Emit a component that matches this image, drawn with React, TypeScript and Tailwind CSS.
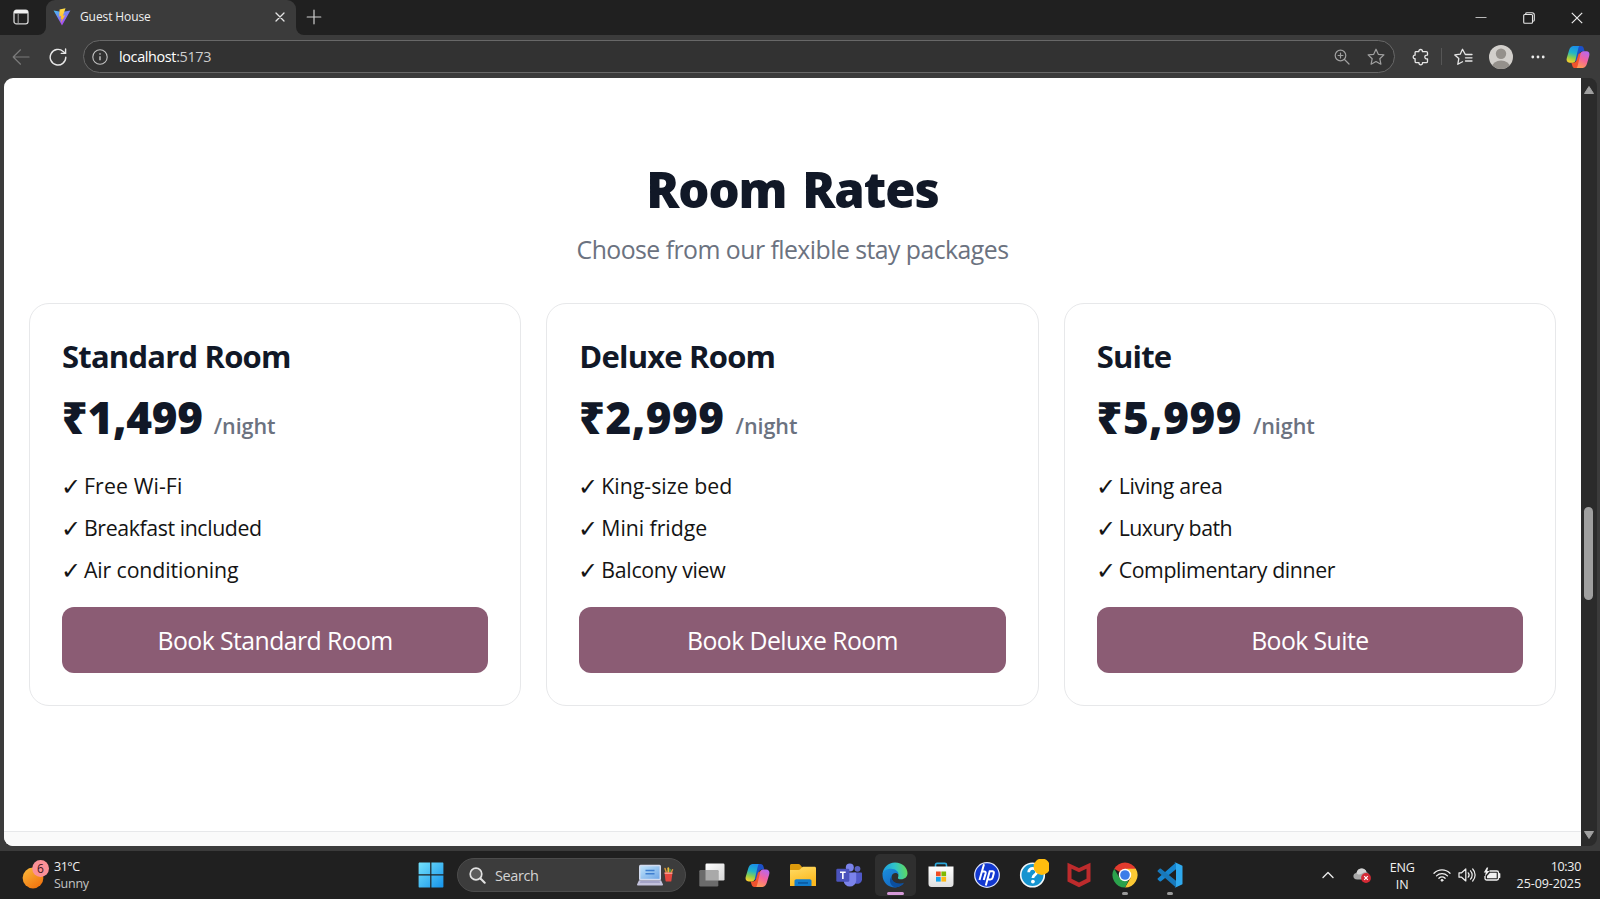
import type { ReactNode } from "react";

type Perk = { label: string; fit: string };
type Room = { name: string; price: string; priceFit: string; perks: Perk[] };

const rooms: Room[] = [
  {
    name: "Standard Room",
    price: "₹1,499",
    priceFit: "tracking-[-0.300px]",
    perks: [
      { label: "Free Wi-Fi", fit: "tracking-[0.100px]" },
      { label: "Breakfast included", fit: "tracking-[-0.400px]" },
      { label: "Air conditioning", fit: "tracking-[-0.120px]" },
    ],
  },
  {
    name: "Deluxe Room",
    price: "₹2,999",
    priceFit: "tracking-[0.450px]",
    perks: [
      { label: "King-size bed", fit: "tracking-[0px]" },
      { label: "Mini fridge", fit: "tracking-[-0.050px]" },
      { label: "Balcony view", fit: "tracking-[-0.300px]" },
    ],
  },
  {
    name: "Suite",
    price: "₹5,999",
    priceFit: "tracking-[0.450px]",
    perks: [
      { label: "Living area", fit: "tracking-[-0.280px]" },
      { label: "Luxury bath", fit: "tracking-[-0.480px]" },
      { label: "Complimentary dinner", fit: "tracking-[-0.380px]" },
    ],
  },
];

function CopilotLogo({ id, size }: { id: string; size: number }) {
  return (
    <svg width={size} height={size} viewBox="0 0 24 24">
      <defs>
        <linearGradient id={`${id}a`} x1="0.5" y1="0" x2="0.3" y2="1">
          <stop offset="0" stopColor="#1a8fe8" />
          <stop offset="0.4" stopColor="#22b5c8" />
          <stop offset="0.7" stopColor="#8fce4a" />
          <stop offset="1" stopColor="#ffd02b" />
        </linearGradient>
        <linearGradient id={`${id}b`} x1="0.7" y1="0" x2="0.3" y2="1">
          <stop offset="0" stopColor="#b867ee" />
          <stop offset="0.5" stopColor="#f4629c" />
          <stop offset="1" stopColor="#ff9a55" />
        </linearGradient>
      </defs>
      <path d="M7.500 1H15c1.500 0 2.300.9 2.700 2.300l.9 3h-2.200c-1.600 0-2.600.9-3 2.400L11.500 15 8 17z" fill="#1c50c8" />
      <path d="M16.500 23H9c-1.500 0-2.300-.9-2.700-2.300l-.9-3h2.200c1.600 0 2.600-.9 3-2.400L12.500 9 16 7z" fill="#f0532d" />
      <path d="M13.500 1H7.200C4.900 1 3.700 3.200 3 5.500L.8 13c-.8 2.700.3 4.700 2.900 4.700h3c1.500 0 2.300-1 2.700-2.300l2.500-10.500C12.400 2.800 12.800 1 13.500 1z" fill={`url(#${id}a)`} />
      <path d="M10.500 23h6.300c2.300 0 3.500-2.200 4.200-4.500l2.200-7.500c.8-2.700-.3-4.700-2.900-4.700h-3c-1.500 0-2.300 1-2.700 2.300l-2.500 10.500C11.600 21.200 11.200 23 10.500 23z" fill={`url(#${id}b)`} />
    </svg>
  );
}

function TitleBar() {
  return (
    <div className="flex h-[35px] shrink-0 bg-[#3b3b3b]">
      <div className="flex w-[46px] items-center justify-center rounded-br-[8px] bg-[#202020] pr-[4px] pb-[2px]">
        <svg width="16" height="16" viewBox="0 0 16 16" fill="none">
          <rect x="1" y="1.200" width="14" height="13.600" rx="2.400" stroke="#d6d6d6" strokeWidth="1.300" />
          <path d="M1.500 4V3c0-1 .8-1.500 1.600-1.500h9.800c.8 0 1.600.5 1.600 1.500v1z" fill="#f2f2f2" stroke="#f2f2f2" />
          <path d="M5.200 5v9.500" stroke="#9d9d9d" strokeWidth="1.100" />
        </svg>
      </div>
      <div className="flex bg-[#202020]">
        <div className="flex w-[250px] items-center rounded-t-[9px] bg-[#3b3b3b] pr-[10px] pb-[2px] pl-[7px]">
          <svg width="18" height="18" viewBox="0 0 18 18" className="shrink-0">
            <defs>
              <linearGradient id="viteA" x1="0" y1="0" x2="0.6" y2="1">
                <stop offset="0" stopColor="#41c1f5" />
                <stop offset="1" stopColor="#b43cf0" />
              </linearGradient>
              <linearGradient id="viteB" x1="0.5" y1="0" x2="0.5" y2="1">
                <stop offset="0" stopColor="#ffdf4a" />
                <stop offset="1" stopColor="#ffa81f" />
              </linearGradient>
            </defs>
            <path d="M.6 2.500 9 17.600 17.400 2.500 9 4z" fill="url(#viteA)" />
            <path d="M12.500.3 6.600 1.500 6.200 8.400l1.900-.4-.6 3.200 1.300-.4-.9 4.300 4.200-7.800-2.200.4z" fill="url(#viteB)" />
          </svg>
          <span className="ml-[9px] flex-1 text-[12px] leading-[18px] tracking-[-0.1px] text-[#f0f0f0]">Guest House</span>
          <svg width="12" height="12" viewBox="0 0 12 12" stroke="#e4e4e4" strokeWidth="1.300" strokeLinecap="round">
            <path d="M2 2l8 8M10 2l-8 8" />
          </svg>
        </div>
      </div>
      <div className="flex flex-1 items-center justify-between rounded-bl-[8px] bg-[#202020] pr-[17px] pb-[2px] pl-[10px]">
        <svg width="16" height="16" viewBox="0 0 16 16" stroke="#d0d0d0" strokeWidth="1.200" strokeLinecap="round">
          <path d="M8 1.200v13.600M1.200 8h13.600" />
        </svg>
        <div className="flex items-center gap-[36px] pt-[2px]">
          <svg width="12" height="12" viewBox="0 0 12 12" stroke="#b9b9b9">
            <path d="M.5 5.500h11" />
          </svg>
          <svg width="12" height="12" viewBox="0 0 12 12" fill="none" stroke="#e6e6e6" strokeWidth="1.100">
            <rect x="0.700" y="2.500" width="8.800" height="8.800" rx="1" />
            <path d="M2.700 1.900c0-.8.500-1.200 1.200-1.200h5.200c1.400 0 2.200.8 2.200 2.200v5.200c0 .7-.4 1.200-1.200 1.200" />
          </svg>
          <svg width="12" height="12" viewBox="0 0 12 12" stroke="#ececec" strokeWidth="1.200">
            <path d="M.8.800l10.400 10.400M11.200.800.8 11.200" />
          </svg>
        </div>
      </div>
    </div>
  );
}

function Toolbar() {
  return (
    <div className="flex h-[43px] shrink-0 items-center bg-[#3b3b3b]">
      <svg width="18" height="18" viewBox="0 0 18 18" fill="none" stroke="#7b7b7b" strokeWidth="1.200" strokeLinecap="round" strokeLinejoin="round" className="ml-[12px]">
        <path d="M17 9H1.200M8.500 1.800 1.200 9l7.300 7.200" />
      </svg>
      <svg width="18" height="18" viewBox="0 0 18 18" fill="none" stroke="#e8e8e8" strokeWidth="1.400" strokeLinecap="round" className="ml-[19px]">
        <path d="M16.800 9.200a7.800 7.800 0 1 1-2.600-5.800l2 1.800" />
        <path d="M16.600 1v4.400h-4.300" />
      </svg>
      <div className="ml-[16px] flex h-[33px] w-[1312px] items-center rounded-full border border-[#686868] bg-[#323232] pr-[9px] pl-[8px]">
        <svg width="16" height="16" viewBox="0 0 16 16" fill="none" stroke="#c2c2c2" strokeWidth="1.100">
          <circle cx="8" cy="8" r="7.200" />
          <path d="M8 7.200v4" strokeWidth="1.400" />
          <circle cx="8" cy="4.900" r="0.500" fill="#c2c2c2" strokeWidth="0.600" />
        </svg>
        <span className="ml-[11px] flex-1 text-[14.400px] leading-[20px] tracking-[-0.350px] text-white">
          localhost<span className="text-[#cfcfcf]">:5173</span>
        </span>
        <svg width="16" height="16" viewBox="0 0 16 16" fill="none" stroke="#a0a0a0" strokeWidth="1.200" strokeLinecap="round">
          <circle cx="6.500" cy="6.500" r="5.300" />
          <path d="M10.500 10.500l4.500 4.500M6.500 4.100v4.800M4.100 6.500h4.800" />
        </svg>
        <svg width="18" height="18" viewBox="0 0 18 18" fill="none" stroke="#a0a0a0" strokeWidth="1.200" strokeLinejoin="round" className="ml-[17px]">
          <path d="M9 1.200l2.300 5.100 5.600.6-4.100 3.800 1.100 5.500L9 13.500l-4.900 2.700 1.100-5.500L1.100 6.900l5.600-.6z" />
        </svg>
      </div>
      <svg width="18" height="18" viewBox="0 0 18 18" fill="none" stroke="#e6e6e6" strokeWidth="1.300" strokeLinejoin="round" className="ml-[17px]">
        <path d="M3.800 3.600h3.100c-.5-2.800 4-2.800 3.500 0h3.900c.7 0 1.200.5 1.200 1.200v2.300c-3.600-.5-3.600 4.300 0 3.800v2.600c0 .7-.5 1.200-1.200 1.200h-3.800c.5 2.800-4 2.800-3.500 0H4.300c-.7 0-1.200-.5-1.200-1.200v-2.800c-2.500.3-2.500-3.800 0-3.500V4.800c0-.7.100-1.200.700-1.200z" />
      </svg>
      <div className="ml-[11px] h-[17px] w-px bg-[#565656]" />
      <svg width="19" height="18" viewBox="0 0 19 18" fill="none" stroke="#e6e6e6" strokeWidth="1.300" strokeLinejoin="round" strokeLinecap="round" className="ml-[12px]">
        <path d="M11.200 6.200 8.500 1.200 6.200 6.200l-5.400.7 4 3.700-1 5.700 4.700-2.600" />
        <path d="M11.500 6.500h6.500M11.500 9.800h6.500M11.500 13h6.500" />
      </svg>
      <svg width="24" height="24" viewBox="0 0 24 24" className="ml-[16px]">
        <clipPath id="avatarClip"><circle cx="12" cy="12" r="12" /></clipPath>
        <g clipPath="url(#avatarClip)">
          <rect width="24" height="24" fill="#d2cfcb" />
          <circle cx="12" cy="8.800" r="5.200" fill="#94908b" />
          <ellipse cx="12" cy="22" rx="9" ry="6.400" fill="#94908b" />
        </g>
      </svg>
      <svg width="14" height="4" viewBox="0 0 14 4" fill="#ececec" className="ml-[18px]">
        <circle cx="1.800" cy="2" r="1.400" /><circle cx="7" cy="2" r="1.400" /><circle cx="12.200" cy="2" r="1.400" />
      </svg>
      <div className="ml-[21px]"><CopilotLogo id="cpTop" size={24} /></div>
    </div>
  );
}

function RoomCard({ room }: { room: Room }) {
  return (
    <article className="rounded-[20px] border border-[#e7e8ea] bg-white px-[32px] pt-[32px] pb-[32px]">
      <h3 className="text-[31px] leading-[40px] font-bold tracking-[-0.800px] text-[#111827]">{room.name}</h3>
      <p className="mt-[17px] flex h-[48px] items-baseline leading-[48px]">
        <span className={`font-['Noto_Sans'] text-[44px] font-black text-[#111827] ${room.priceFit}`}>{room.price}</span>
        <span className="ml-[11px] text-[21.500px] font-semibold tracking-[-0.050px] text-[#6b7280]">/night</span>
      </p>
      <ul className="mt-[28px] flex flex-col gap-[7.850px] text-[21.300px] leading-[34px] text-[#141414]">
        {room.perks.map((perk) => (
          <li key={perk.label} className="flex h-[34px]">
            <span className="-ml-px w-[23px] text-[24px]">✓</span>
            <span className={perk.fit}>{perk.label}</span>
          </li>
        ))}
      </ul>
      <button className="mt-[20px] h-[66px] w-full rounded-[12px] bg-[#8b5c74] text-[24.800px] leading-[36px] tracking-[-0.580px] text-white">
        Book {room.name}
      </button>
    </article>
  );
}

function Page() {
  return (
    <div className="flex min-h-0 flex-1 bg-[#3b3b3b] pr-[3px] pb-[5px] pl-[4px]">
      <main className="flex flex-1 flex-col overflow-hidden rounded-l-[9px] bg-white">
        <section className="flex-1 px-[25px] pt-[86px]">
          <h2 className="text-center text-[49px] leading-[50px] font-extrabold tracking-[-1.050px] [word-spacing:4px] text-[#111827]">Room Rates</h2>
          <p className="mt-[17px] text-center text-[24.800px] leading-[36px] tracking-[-0.530px] text-[#6b7280]">
            Choose from our flexible stay packages
          </p>
          <div className="mt-[36px] grid grid-cols-3 gap-[25px]">
            {rooms.map((room) => (
              <RoomCard key={room.name} room={room} />
            ))}
          </div>
        </section>
        <div className="h-[15px] border-t border-[#e7e8ea] bg-[#fafafa]" />
      </main>
      <div className="flex w-[16px] flex-col items-center rounded-r-[8px] bg-[#2b2b2b] pt-[7px] pr-px pb-[6px]">
        <svg width="12" height="10" viewBox="0 0 12 10" fill="#a0a0a0" stroke="#a0a0a0" strokeLinejoin="round">
          <path d="M6 1.500 10.500 8.500h-9z" />
        </svg>
        <div className="mt-[412px] h-[93px] w-[9px] rounded-full bg-[#9f9f9f]" />
        <div className="flex-1" />
        <svg width="12" height="10" viewBox="0 0 12 10" fill="#a0a0a0" stroke="#a0a0a0" strokeLinejoin="round">
          <path d="M6 8.500 10.500 1.500h-9z" />
        </svg>
      </div>
    </div>
  );
}

function Slot({ children, active, mark }: { children: ReactNode; active?: boolean; mark?: string }) {
  return (
    <div className={`relative flex h-[42px] w-[41px] items-center justify-center rounded-[5px] ${active ? "bg-[#2f2f2f]" : ""}`}>
      {children}
      {mark && <span className={`absolute bottom-px h-[3px] rounded-full ${mark}`} />}
    </div>
  );
}

function TaskIcons() {
  return (
    <div className="flex items-center gap-[4.900px]">
      <Slot>
        <svg width="26" height="24" viewBox="0 0 26 24">
          <defs>
            <linearGradient id="tv" x1="0" y1="0" x2="1" y2="1"><stop stopColor="#fff" /><stop offset="1" stopColor="#d5d5d5" /></linearGradient>
          </defs>
          <rect x="6.500" y="0.500" width="19" height="17" rx="1.200" fill="url(#tv)" />
          <rect x="0.300" y="7" width="19" height="16.500" rx="1.200" fill="#6b6b6b" />
          <path d="M6.500 7h12.800v10.500H6.500z" fill="#a9a9a9" />
        </svg>
      </Slot>
      <Slot><CopilotLogo id="cpBar" size={25} /></Slot>
      <Slot>
        <svg width="26" height="24" viewBox="0 0 26 24">
          <defs>
            <linearGradient id="fold" x1="0" y1="0" x2="0.400" y2="1"><stop stopColor="#ffdd68" /><stop offset="1" stopColor="#fbb81e" /></linearGradient>
          </defs>
          <path d="M0 2.500C0 1.600.6 1 1.500 1h7c.7 0 1.200.2 1.600.7L12 4v6H0z" fill="#dd9a0c" />
          <path d="M0 7h8.500c.7 0 1.200-.3 1.700-.8l2-2c.4-.4.800-.5 1.400-.5h11c.8 0 1.400.6 1.400 1.300V23H0z" fill="url(#fold)" />
          <path d="M4.500 23v-5c0-1.100.8-1.800 1.800-1.800h13.400c1 0 1.800.7 1.800 1.800v5z" fill="#127dcc" />
          <path d="M8 19.200h10v1.500H8z" fill="#0a559c" />
        </svg>
      </Slot>
      <Slot>
        <svg width="26" height="24" viewBox="0 0 26 24">
          <circle cx="21.500" cy="5.800" r="2.900" fill="#5a62c3" />
          <path d="M17.500 9.500H25c.6 0 1 .4 1 1v5.700a4.700 4.700 0 0 1-7 4z" fill="#5059c9" />
          <circle cx="13.800" cy="4.500" r="4" fill="#7b83eb" />
          <path d="M8.500 9.500h10.700c.6 0 1 .5 1 1v6.700a6.300 6.300 0 0 1-12.600 0z" fill="#7b83eb" />
          <rect x="0.300" y="5.800" width="13" height="13" rx="1.200" fill="#4b53bc" />
          <path d="M4 9.300h5.700M6.850 9.300v6.600" stroke="#fff" strokeWidth="1.600" />
        </svg>
      </Slot>
      <Slot active mark="w-[17px] bg-[#d59ad8]">
        <svg width="26" height="26" viewBox="0 0 26 26">
          <defs>
            <linearGradient id="edA" x1="0" y1="0.400" x2="1" y2="0.300"><stop stopColor="#1d9de2" /><stop offset="0.500" stopColor="#2fc3c9" /><stop offset="1" stopColor="#62dc58" /></linearGradient>
            <linearGradient id="edB" x1="0" y1="0" x2="0.700" y2="1"><stop stopColor="#1c8fdc" /><stop offset="1" stopColor="#1267c4" /></linearGradient>
          </defs>
          <path d="M.5 12.500C.8 5.800 6.200.5 13 .5c7.600 0 12.500 5.200 12.500 10.800 0 3.800-3 6-6.300 6-2.800 0-3.600-1-3.200-1.900 1.600-3.600-1.300-7-5.500-7C5 8.400.9 10 .5 12.500z" fill="url(#edA)" />
          <path d="M.5 13c0-3.900 3.800-6.300 8.500-6.300 4.700 0 7.700 3 7.600 6-2-3-7.100-1.700-7.100 2.700 0 5.200 6.500 8.200 12 6.200A12.400 12.400 0 0 1 13 25.500C6 25.500.5 20 .5 13z" fill="url(#edB)" />
          <path d="M9.600 14.200c-.8 5.200 5.400 8.800 12.500 6.600-2 2.800-5.300 4.500-8.800 4.600C8.500 24 6.200 18.600 9.600 14.200z" fill="#0c4f9e" />
        </svg>
      </Slot>
      <Slot>
        <svg width="26" height="26" viewBox="0 0 26 26">
          <defs>
            <linearGradient id="store" x1="0" y1="0" x2="0" y2="1"><stop stopColor="#fff" /><stop offset="1" stopColor="#dedede" /></linearGradient>
          </defs>
          <path d="M7.500 6V3c0-1 .6-1.600 1.600-1.600h7.800c1 0 1.600.6 1.600 1.600v3" fill="none" stroke="#2aa8dc" strokeWidth="1.600" />
          <path d="M.5 4.500h25v17.500c0 1.800-1.200 3-3 3H3.500c-1.800 0-3-1.200-3-3z" fill="url(#store)" />
          <rect x="8" y="9.500" width="4.700" height="4.700" fill="#ef4d23" /><rect x="13.400" y="9.500" width="4.700" height="4.700" fill="#7fb900" />
          <rect x="8" y="14.900" width="4.700" height="4.700" fill="#13a1ec" /><rect x="13.400" y="14.900" width="4.700" height="4.700" fill="#fdb813" />
        </svg>
      </Slot>
      <Slot>
        <svg width="26" height="26" viewBox="0 0 26 26">
          <circle cx="13" cy="13" r="12.300" fill="#1238d0" stroke="#dfe5fb" strokeWidth="1.200" />
          <path d="M10 2.300 5.500 18M7.700 9.500h2.500c1.300 0 1.700.8 1.400 2L9.700 18M19 9.300h-3.300L11.800 23.500M15.700 9.300h2.600c1.400 0 1.800.8 1.500 2l-1.200 4.500c-.3 1.200-1 1.700-2.200 1.700h-2" fill="none" stroke="#fff" strokeWidth="2" />
        </svg>
      </Slot>
      <Slot>
        <svg width="32" height="32" viewBox="0 0 32 32" className="shrink-0">
          <circle cx="15.500" cy="16" r="11.800" fill="#1594d0" stroke="#f3f8fb" strokeWidth="1.600" />
          <path d="M11.700 13.300c0-5.200 8-5 8-.4 0 3-3.800 3-3.800 6" fill="none" stroke="#fff" strokeWidth="2.800" />
          <circle cx="15.900" cy="22.600" r="1.900" fill="#fff" />
          <circle cx="24.800" cy="7.700" r="8.200" fill="#ffbd0e" />
        </svg>
      </Slot>
      <Slot>
        <svg width="24" height="26" viewBox="0 0 24 26">
          <path d="M.5.8 12 6 23.500.8v18.700L12 25.200.5 19.500zM4.500 6.800v10l7.500 3.600 7.500-3.600v-10L12 10.300z" fill="#bd2b2c" fillRule="evenodd" />
        </svg>
      </Slot>
      <Slot mark="w-[6px] bg-[#9a9a9a]">
        <svg width="26" height="26" viewBox="0 0 26 26">
          <path d="M13 13 2.200 6.700a12.500 12.500 0 0 1 21.600 0z" fill="#e23b2e" />
          <path d="M13 6.700h10.800A12.500 12.500 0 0 1 13 25.500l5.500-9.500z" fill="#fcc934" />
          <path d="M2.200 6.700 7.600 16.100 13 19.200l3.500-.6L13 25.500A12.500 12.500 0 0 1 2.200 6.700z" fill="#2ba24c" />
          <circle cx="13" cy="13" r="6.200" fill="#fff" /><circle cx="13" cy="13" r="4.800" fill="#3c7de8" />
        </svg>
      </Slot>
      <Slot mark="w-[6px] bg-[#9a9a9a]">
        <svg width="26" height="26" viewBox="0 0 26 26">
          <path d="M19 .5v6.800L4 19.200c-.5.4-1 .4-1.400 0L.9 17.700c-.5-.5-.5-1.100 0-1.500z" fill="#1685cf" />
          <path d="M19 25.500v-6.800L4 6.800c-.5-.4-1-.4-1.400 0L.9 8.300c-.5.5-.5 1.100 0 1.500z" fill="#1878ba" />
          <path d="M18.500.5 25 3.400c.3.200.5.500.5.900v17.400c0 .4-.2.700-.5.900l-6.500 2.900c-.5.100-1 0-1.400-.4.800.6 1.900.1 1.900-.9V1.800c0-1-1.100-1.500-1.900-.9.400-.4.900-.5 1.400-.4z" fill="#2fa9ee" />
        </svg>
      </Slot>
    </div>
  );
}

function Taskbar() {
  return (
    <footer className="flex h-[48px] shrink-0 items-center bg-[#202020] text-[12.500px] text-[#f0f0f0]">
      <div className="flex w-[418px] items-center pb-px pl-[22px]">
        <svg width="28" height="30" viewBox="0 0 28 30">
          <defs>
            <linearGradient id="sun" x1="0.100" y1="0" x2="0.800" y2="1"><stop stopColor="#fbb83a" /><stop offset="1" stopColor="#f0700c" /></linearGradient>
          </defs>
          <circle cx="11" cy="18" r="10.400" fill="url(#sun)" />
          <circle cx="18.600" cy="8.500" r="8.400" fill="#fb9097" />
          <text x="18.500" y="12.900" textAnchor="middle" fontSize="12" fill="#3d1418">6</text>
        </svg>
        <div className="ml-[4px] leading-[17px]">
          <div className="tracking-[-0.500px]">31°C</div>
          <div className="tracking-[-0.250px] text-[#c4c4c4]">Sunny</div>
        </div>
      </div>
      <svg width="26" height="26" viewBox="0 0 26 26">
        <defs>
          <linearGradient id="win" x1="0" y1="0" x2="1" y2="1"><stop stopColor="#74e2fc" /><stop offset="1" stopColor="#1593ea" /></linearGradient>
        </defs>
        <path d="M1.200.6h11v11.600H.6v-11zM13.400.6h11.400c.3 0 .6.300.6.600v11h-12zM.6 13.400h11.600v12h-11a.6.600 0 0 1-.6-.6zM13.400 13.400h12v11.400c0 .3-.3.600-.6.600H13.400z" fill="url(#win)" />
      </svg>
      <div className="ml-[13px] flex h-[34px] w-[229px] items-center rounded-full border border-[#4c4c4c] bg-[#3c3c3c] pr-[11px] pl-[11px]">
        <svg width="17" height="17" viewBox="0 0 17 17" fill="#5c5c5c" stroke="#e2e2e2" strokeLinecap="round">
          <circle cx="7" cy="7" r="5.800" strokeWidth="1.700" />
          <path d="M11.500 11.500l4.200 4.200" strokeWidth="2" />
        </svg>
        <span className="ml-[9px] flex-1 pt-px text-[14.500px] leading-[20px] tracking-[-0.400px] text-[#d4d4d4]">Search</span>
        <svg width="37" height="22" viewBox="0 0 37 22">
          <defs>
            <linearGradient id="lap" x1="0" y1="0" x2="1" y2="1"><stop stopColor="#bfe3fb" /><stop offset="1" stopColor="#6fa6e6" /></linearGradient>
          </defs>
          <rect x="2" y="0.800" width="22" height="15.500" rx="1.500" fill="#d3dcf0" />
          <rect x="3.500" y="2.300" width="19" height="12.500" fill="url(#lap)" />
          <path d="M8.500 6.500h9M8.500 9.800h9" stroke="#3f7fd0" strokeWidth="1.500" />
          <path d="M2 16.300h22l2 4.200c0 .7-.5 1-1.200 1H1.200c-.7 0-1.200-.3-1.200-1z" fill="#c3c2dc" />
          <path d="M3.500 17.300h19l.6 1.500H2.900z" fill="#9a9ac0" />
          <path d="M29.500 9 28 4.500M34 9l1.500-3.200" stroke="#d9973a" strokeWidth="1.500" strokeLinecap="round" />
          <path d="M31.300 9V4.200" stroke="#e9b83b" strokeWidth="1.800" strokeLinecap="round" />
          <path d="M33 8.500V5" stroke="#54a84c" strokeWidth="1.500" />
          <path d="M27.500 8.500h8l-1.100 8.200c0 .6-.5.900-1.100.9h-3.600c-.6 0-1.100-.3-1.200-.9z" fill="#e4473f" />
          <path d="M27.500 8.500h8l-.2 1.500h-7.600z" fill="#f39a8c" />
        </svg>
      </div>
      <div className="ml-[5px]"><TaskIcons /></div>
      <div className="flex flex-1 items-center justify-end pr-[19px]">
        <svg width="12" height="8" viewBox="0 0 12 8" fill="none" stroke="#e8e8e8" strokeWidth="1.400" strokeLinecap="round" strokeLinejoin="round">
          <path d="M1 6.500 6 1.500l5 5" />
        </svg>
        <svg width="18" height="16" viewBox="0 0 18 16" className="ml-[19px]">
          <path d="M4.300 12.500C-1 12.300-.5 6.300 3.500 6 4.500.3 12.500.2 13.500 5.300c3.600 1 3.500 6.700-.5 7.200z" fill="#a9a9a9" />
          <path d="M3.500 6C4.500.3 12.500.2 13.500 5.300 9 4.500 7 10 3.500 6z" fill="#d4d4d4" />
          <circle cx="13" cy="11" r="4.900" fill="#d42a35" />
          <path d="M11.200 9.200l3.600 3.600M14.800 9.200l-3.600 3.600" stroke="#fff" strokeWidth="1.200" />
        </svg>
        <div className="ml-[19px] pt-px text-center leading-[17px]">
          <div className="tracking-[-0.200px]">ENG</div>
          <div>IN</div>
        </div>
        <svg width="18" height="14" viewBox="0 0 18 14" fill="none" stroke="#f0f0f0" strokeWidth="1.300" strokeLinecap="round" className="ml-[18px]">
          <path d="M1 5.200a11.300 11.300 0 0 1 16 0M3.500 7.900a7.800 7.800 0 0 1 11 0M5.900 10.300a4.400 4.400 0 0 1 6.200 0" />
          <circle cx="9" cy="12.300" r="1" fill="#f0f0f0" strokeWidth="0.800" />
        </svg>
        <svg width="18" height="16" viewBox="0 0 18 16" fill="none" stroke="#f0f0f0" strokeWidth="1.200" strokeLinecap="round" strokeLinejoin="round" className="ml-[7px]">
          <path d="M1 5.800h2.600L7.800 2v12l-4.200-3.800H1z" />
          <path d="M10.200 5.800c1 1.200 1 3.200 0 4.400M12.500 3.800c2.200 2.300 2.200 6.100 0 8.400M14.700 2c3.200 3.300 3.200 8.700 0 12" />
        </svg>
        <svg width="18" height="16" viewBox="0 0 18 16" fill="none" className="ml-[7px]">
          <path d="M6.500 4h7.300c1 0 1.700.7 1.700 1.700v5.600c0 1-.7 1.700-1.700 1.700H3.700c-1 0-1.700-.7-1.700-1.700V9" stroke="#f0f0f0" strokeWidth="1.300" />
          <path d="M7 5.800h6.700v5.400H4V9z" fill="#f0f0f0" />
          <path d="M16.500 6.800v3.400" stroke="#f0f0f0" strokeWidth="1.700" strokeLinecap="round" />
          <path d="M3.800.5.800 5.500h2L1.800 9.500l4.700-5.500H4.200L5.200.5z" fill="#f0f0f0" />
        </svg>
        <div className="ml-[16px] text-right leading-[17px]">
          <div className="tracking-[-0.300px]">10:30</div>
          <div className="tracking-[-0.080px]">25-09-2025</div>
        </div>
      </div>
    </footer>
  );
}

export default function App() {
  return (
    <div className="flex h-[899px] w-[1600px] flex-col overflow-hidden bg-[#202020] font-['Open_Sans','Noto_Sans',sans-serif]">
      <TitleBar />
      <Toolbar />
      <Page />
      <Taskbar />
    </div>
  );
}
